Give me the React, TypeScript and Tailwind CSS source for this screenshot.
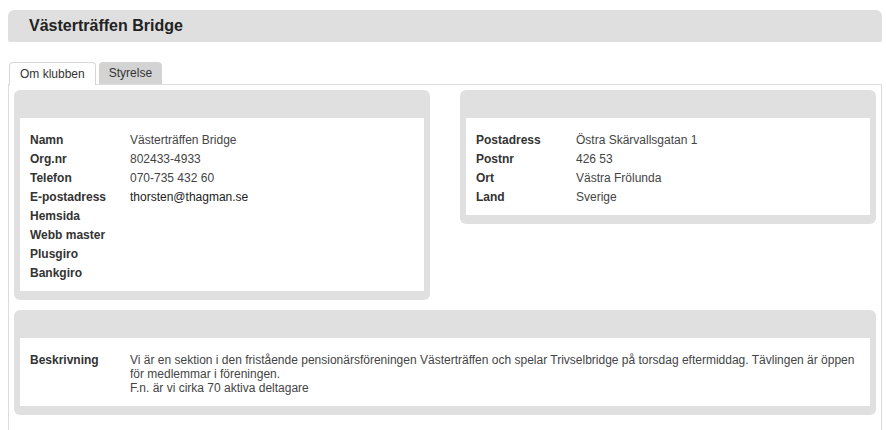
import React from 'react';

const Row = ({ label, value }: { label: string; value?: React.ReactNode }) => (
  <div className="flex leading-[19px]">
    <div className="w-[100px] shrink-0 font-bold text-[#333]">{label}</div>
    <div className="flex-1 text-[#444]">{value}</div>
  </div>
);

const Panel = ({ children }: { children: React.ReactNode }) => (
  <div className="rounded-[6px] bg-[#e0e0e0] px-[6px] pt-[28px] pb-[9px]">
    <div className="bg-white px-[10px] pt-[13px] pb-[8px]">{children}</div>
  </div>
);

const App = () => {
  const info = [
    { label: 'Namn', value: 'Västerträffen Bridge' },
    { label: 'Org.nr', value: '802433-4933' },
    { label: 'Telefon', value: '070-735 432 60' },
    { label: 'E-postadress', value: <span className="text-[#222]">thorsten@thagman.se</span> },
    { label: 'Hemsida' },
    { label: 'Webb master' },
    { label: 'Plusgiro' },
    { label: 'Bankgiro' },
  ];

  const address = [
    { label: 'Postadress', value: 'Östra Skärvallsgatan 1' },
    { label: 'Postnr', value: '426 53' },
    { label: 'Ort', value: 'Västra Frölunda' },
    { label: 'Land', value: 'Sverige' },
  ];

  return (
    <div className="min-h-[430px] bg-white pt-[10px] px-[4px] text-[12px]" style={{ fontFamily: '"Liberation Sans", Arial, sans-serif' }}>
      <div className="ml-[4px] w-[874px] h-[32px] rounded-t-[6px] rounded-b-[2px] bg-[#dfdfdf] pl-[21px] flex items-center">
        <h1 className="text-[16px] font-bold text-[#222]">Västerträffen Bridge</h1>
      </div>

      <div className="ml-[4px] w-[874px] mt-[20px]">
        <div className="flex gap-[3px] pl-[1px] h-[22px]">
          <div className="relative z-10 h-[23px] px-[10px] flex items-center rounded-t-[4px] border border-b-0 border-[#d6d6d6] bg-white text-[#333]">
            Om klubben
          </div>
          <div className="h-[22px] px-[10px] flex items-center rounded-t-[4px] bg-[#d3d3d3] text-[#333]">
            Styrelse
          </div>
        </div>

        <div className="border border-[#dcdcdc] border-b-0 pl-[5px] pr-[5px] pt-[5px] pb-[20px]">
          <div className="grid grid-cols-2 gap-[30px] items-start">
            <Panel>
              {info.map((r) => (
                <Row key={r.label} label={r.label} value={r.value} />
              ))}
            </Panel>
            <Panel>
              {address.map((r) => (
                <Row key={r.label} label={r.label} value={r.value} />
              ))}
            </Panel>
          </div>

          <div className="mt-[10px]">
            <Panel>
              <div className="flex leading-[14px] pt-[2px] pb-[3px]">
                <div className="w-[100px] shrink-0 font-bold text-[#333]">Beskrivning</div>
                <div className="flex-1 text-[#444]">
                  Vi är en sektion i den fristående pensionärsföreningen Västerträffen och spelar Trivselbridge på torsdag eftermiddag. Tävlingen är öppen för medlemmar i föreningen.
                  <br />
                  F.n. är vi cirka 70 aktiva deltagare
                </div>
              </div>
            </Panel>
          </div>
        </div>
      </div>
    </div>
  );
};

export default App;
